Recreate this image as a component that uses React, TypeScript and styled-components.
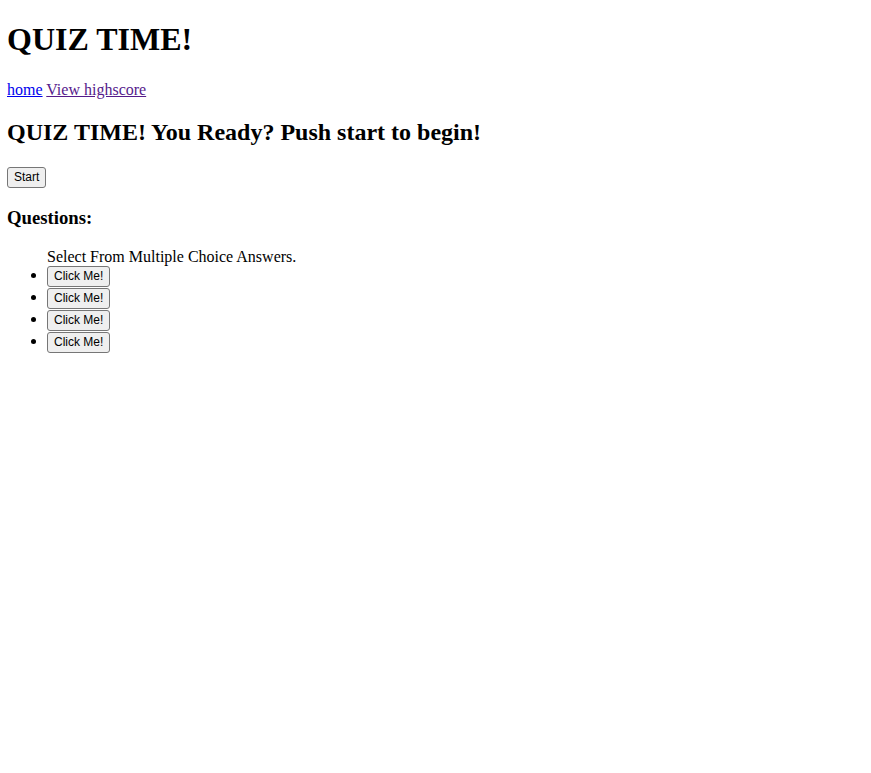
import React from "react";
import styled, { createGlobalStyle } from "styled-components";

const GlobalStyle = createGlobalStyle`
  body {
    margin: 0 8px 8px 7px;
    font-family: "Liberation Serif", "Times New Roman", serif;
    font-size: 16px;
    color: #000;
    background: #fff;
  }
`;

const answers = ["Click Me!", "Click Me!", "Click Me!", "Click Me!"];

export default function App() {
  return (
    <>
      <GlobalStyle />
      <Header>
        <Title>QUIZ TIME!</Title>
        <Nav>
          <NavLink href="#home">home</NavLink>{" "}
          <NavLink href="#highscore" $visited>
            View highscore
          </NavLink>
        </Nav>
      </Header>
      <Main>
        <Intro>QUIZ TIME! You Ready? Push start to begin!</Intro>
        <Button>Start</Button>
        <SectionTitle>Questions:</SectionTitle>
        <AnswerList>
          <Prompt>Select From Multiple Choice Answers.</Prompt>
          {answers.map((label, i) => (
            <Answer key={i}>
              <Button>{label}</Button>
            </Answer>
          ))}
        </AnswerList>
      </Main>
    </>
  );
}

const Header = styled.header`
  display: block;
`;

const Title = styled.h1`
  font-size: 32px;
  font-weight: bold;
  margin: 21.44px 0 22.44px;
`;

const Nav = styled.nav`
  display: block;
`;

const NavLink = styled.a<{ $visited?: boolean }>`
  color: ${p => (p.$visited ? "#551a8b" : "#0000ee")};
  text-decoration: underline;
`;

const Main = styled.main`
  display: block;
`;

const Intro = styled.h2`
  font-size: 24px;
  font-weight: bold;
  margin: 19.92px 0 20.92px;
`;

const SectionTitle = styled.h3`
  font-size: 18.72px;
  font-weight: bold;
  margin: 19.72px 0 18.72px;
`;

const Button = styled.button`
  font-family: "Liberation Sans", Arial, sans-serif;
  font-size: 12px;
  line-height: 17px;
  color: #000;
  background: #efefef;
  border: 1px solid #767676;
  border-radius: 3px;
  padding: 1px 6px;
  cursor: pointer;
`;

const AnswerList = styled.ul`
  margin: 17px 0 16px;
  padding-left: 40px;
  list-style: disc;
`;

const Prompt = styled.div`
  display: block;
`;

const Answer = styled.li`
  display: list-item;
  height: 22px;
`;
